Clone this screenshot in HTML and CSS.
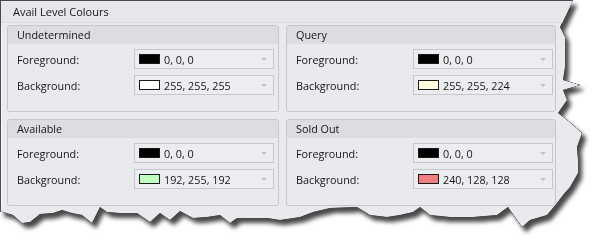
FILE: index.html
```html
<!DOCTYPE html>
<html>
<head>
<meta charset="utf-8">
<link rel="stylesheet" href="styles.css">
</head>
<body>
<div class="shadow">
  <div class="panel">
    <div class="title">Avail Level Colours</div>
    <div class="grid">
      <section class="group">
        <div class="group-head">Undetermined</div>
        <div class="row"><span class="label">Foreground:</span><div class="combo"><span class="swatch" style="background:#000000"></span><span class="val">0, 0, 0</span><span class="arrow"></span></div></div>
        <div class="row"><span class="label">Background:</span><div class="combo"><span class="swatch" style="background:#ffffff"></span><span class="val">255, 255, 255</span><span class="arrow"></span></div></div>
      </section>
      <section class="group">
        <div class="group-head">Query</div>
        <div class="row"><span class="label">Foreground:</span><div class="combo"><span class="swatch" style="background:#000000"></span><span class="val">0, 0, 0</span><span class="arrow"></span></div></div>
        <div class="row"><span class="label">Background:</span><div class="combo"><span class="swatch" style="background:#ffffe0"></span><span class="val">255, 255, 224</span><span class="arrow"></span></div></div>
      </section>
      <section class="group">
        <div class="group-head">Available</div>
        <div class="row"><span class="label">Foreground:</span><div class="combo"><span class="swatch" style="background:#000000"></span><span class="val">0, 0, 0</span><span class="arrow"></span></div></div>
        <div class="row"><span class="label">Background:</span><div class="combo"><span class="swatch" style="background:#c0ffc0"></span><span class="val">192, 255, 192</span><span class="arrow"></span></div></div>
      </section>
      <section class="group">
        <div class="group-head">Sold Out</div>
        <div class="row"><span class="label">Foreground:</span><div class="combo"><span class="swatch" style="background:#000000"></span><span class="val">0, 0, 0</span><span class="arrow"></span></div></div>
        <div class="row"><span class="label">Background:</span><div class="combo"><span class="swatch" style="background:#f08080"></span><span class="val">240, 128, 128</span><span class="arrow"></span></div></div>
      </section>
    </div>
  </div>
</div>
</body>
</html>
```
FILE: styles.css
```css
html, body {
  margin: 0;
  padding: 0;
  background: #ffffff;
}
body {
  width: 604px;
  height: 250px;
  overflow: hidden;
  font-family: "Open Sans", "Noto Sans", sans-serif;
  font-size: 10.8px;
  color: #151515;
}
.shadow {
  width: 604px;
  height: 250px;
  filter: drop-shadow(0 0 0.5px #000) drop-shadow(0 0 0.4px #000) drop-shadow(4px 5px 2px rgba(40,40,40,0.85));
}
.panel {
  box-sizing: border-box;
  width: 590px;
  height: 232px;
  background: #e9eaed;
  border-left: 1px solid #4a4a4a;
  border-top: 1px solid #4a4a4a;
  box-shadow: inset 1px 1px 0 #f7f7f9;
  clip-path: polygon(0 0, 573px 0, 565px 17px, 560px 27px, 565px 37px, 565px 67px, 563px 80px, 580px 85px, 563px 90px, 567px 100px, 558px 113px, 567px 120px, 582px 133px, 577px 147px, 578px 160px, 578px 173px, 570px 187px, 563px 195px, 557px 203px, 547px 215px, 530px 220px, 522px 227px, 515px 217px, 508px 207px, 497px 215px, 473px 217px, 450px 217px, 430px 215px, 420px 207px, 413px 212px, 400px 215px, 387px 217px, 370px 215px, 357px 207px, 330px 208px, 313px 212px, 300px 217px, 280px 220px, 267px 218px, 253px 218px, 237px 218px, 230px 223px, 220px 215px, 207px 217px, 193px 218px, 180px 211px, 170px 220px, 160px 213px, 150px 222px, 137px 213px, 120px 213px, 107px 212px, 100px 207px, 92px 223px, 82px 215px, 72px 213px, 62px 210px, 53px 213px, 40px 214px, 30px 222px, 22px 223px, 13px 215px, 0 211px);
}
.title {
  height: 22px;
  line-height: 21px;
  padding-left: 12px;
  font-size: 11px;
  background: #e6e7eb;
  border-bottom: 1px solid #dcdde1;
  box-sizing: border-box;
}
.grid {
  display: grid;
  grid-template-columns: 272px 270px;
  grid-auto-rows: 87px;
  column-gap: 7px;
  row-gap: 7px;
  padding: 2px 0 0 6px;
}
.group {
  border: 1px solid #c6c7cb;
  border-radius: 3px;
  background: #e9eaed;
  display: flex;
  flex-direction: column;
  gap: 6px;
  overflow: hidden;
}
.group-head {
  height: 18px;
  line-height: 18px;
  padding-left: 9px;
  background: #dcdde1;
  margin-bottom: -1px;
}
.row {
  display: flex;
  align-items: center;
  height: 20px;
}
.label {
  width: 117px;
  padding-left: 9px;
}
.combo {
  box-sizing: border-box;
  width: 140px;
  height: 20px;
  border: 1px solid #c6c7cb;
  background: #ecedf0;
  display: flex;
  align-items: center;
  padding-left: 4px;
}
.swatch {
  box-sizing: border-box;
  width: 21px;
  height: 10px;
  border: 1px solid #1a1a1a;
  margin-right: 4px;
}
.val {
  flex: 1;
}
.arrow {
  width: 0;
  height: 0;
  border-left: 3px solid transparent;
  border-right: 3px solid transparent;
  border-top: 3px solid #c2c3c7;
  margin-right: 6px;
}
```
